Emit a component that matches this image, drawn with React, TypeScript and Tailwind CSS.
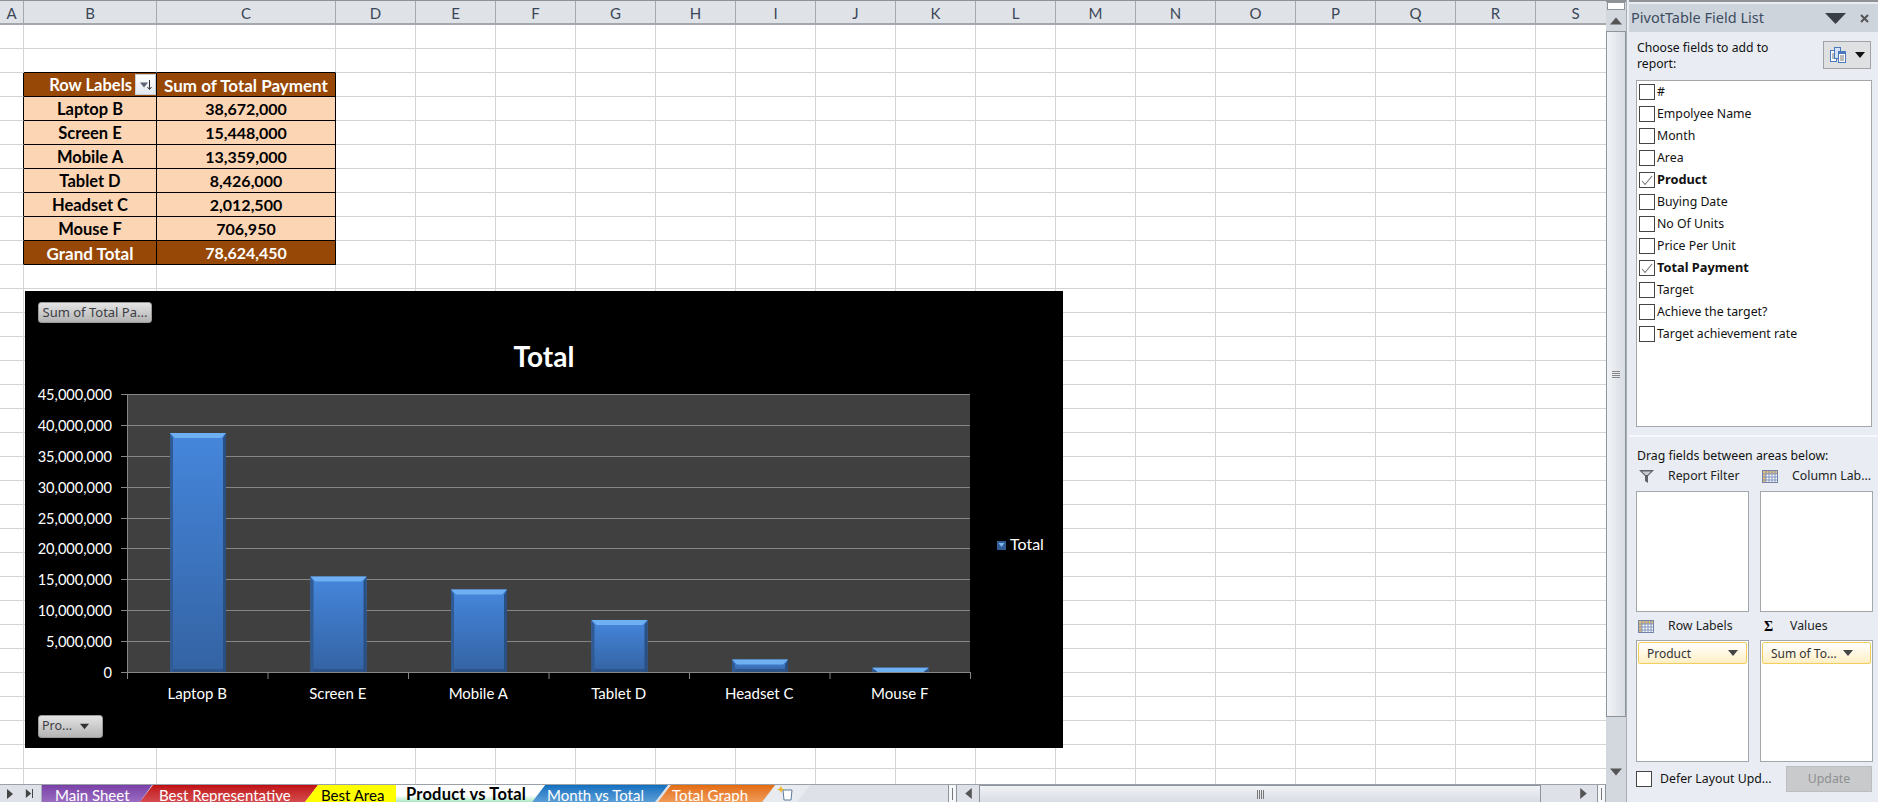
import { ReactNode } from 'react';

const columns = [
  { name: 'A', width: 'w-[24px]' },
  { name: 'B', width: 'w-[133px]' },
  { name: 'C', width: 'w-[179px]' },
  ...'DEFGHIJKLMNOPQRS'.split('').map((name) => ({ name, width: 'w-[80px]' })),
];

const pivotRows = [
  { label: 'Laptop B', total: '38,672,000', value: 38672000 },
  { label: 'Screen E', total: '15,448,000', value: 15448000 },
  { label: 'Mobile A', total: '13,359,000', value: 13359000 },
  { label: 'Tablet D', total: '8,426,000', value: 8426000 },
  { label: 'Headset C', total: '2,012,500', value: 2012500 },
  { label: 'Mouse F', total: '706,950', value: 706950 },
];

const fields = [
  { name: '#' },
  { name: 'Empolyee Name' },
  { name: 'Month' },
  { name: 'Area' },
  { name: 'Product', checked: true },
  { name: 'Buying Date' },
  { name: 'No Of Units' },
  { name: 'Price Per Unit' },
  { name: 'Total Payment', checked: true },
  { name: 'Target' },
  { name: 'Achieve the target?' },
  { name: 'Target achievement rate' },
];

const sansSheet = "font-['Lato','Liberation_Sans',sans-serif]";
const sansPanel = "font-['Noto_Sans','Liberation_Sans',sans-serif]";

function Triangle({ size = 8, dir = 'down', color = '#444' }: { size?: number; dir?: 'down' | 'up' | 'left' | 'right'; color?: string }) {
  const points = {
    down: '0,2 10,2 5,8',
    up: '0,8 10,8 5,2',
    left: '8,0 8,10 2,5',
    right: '2,0 2,10 8,5',
  }[dir];
  return (
    <svg width={size} height={size} viewBox="0 0 10 10" className="shrink-0">
      <polygon points={points} fill={color} />
    </svg>
  );
}

function PivotCell({ row, col }: { row: number; col: number }) {
  // row 2 is the pivot header, rows 3-8 the data, row 9 the grand total
  if ((col !== 1 && col !== 2) || row < 2 || row > 9) return null;
  if (row === 2) {
    return col === 1 ? (
      <div className="flex h-full items-center justify-end gap-[3px] text-[16.5px] text-white">
        <span className="pt-[1px]">Row Labels</span>
        <span className="flex h-[21px] w-[21px] items-center justify-center border border-[#c5cdd8] bg-gradient-to-b from-white to-[#e3e8ef]">
          <Triangle size={8} color="#5a6472" />
          <svg width="5" height="12" viewBox="0 0 5 12" className="-ml-[1px]">
            <path d="M2.500 1v9M0.500 8l2 2.500L4.500 8" stroke="#333" fill="none" />
          </svg>
        </span>
      </div>
    ) : (
      <div className="flex h-full items-center justify-center pt-[1px] text-[17px] text-white">Sum of Total Payment</div>
    );
  }
  const item = pivotRows[row - 3];
  const text = row === 9 ? (col === 1 ? 'Grand Total' : '78,624,450') : col === 1 ? item.label : item.total;
  const size = col === 2 ? 'text-[16px]' : row === 9 ? 'text-[17px]' : 'text-[16.5px]';
  return <div className={`flex h-full items-center justify-center pt-[1px] ${size} ${row === 9 ? 'text-white' : 'text-black'}`}>{text}</div>;
}

function cellClass(row: number, col: number) {
  const inTable = row >= 2 && row <= 9;
  const body = col === 1 || col === 2;
  if (inTable && body) return `border-r border-b border-black ${row === 2 || row === 9 ? 'bg-[#974706]' : 'bg-[#fcd5b4]'}`;
  if (inTable && col === 0) return 'border-b border-b-[#d4d4d4] border-r border-r-black';
  if (row === 1 && body) return 'border-r border-r-[#d4d4d4] border-b border-b-black';
  return 'border-r border-b border-[#d4d4d4]';
}

function Sheet() {
  return (
    <div className="relative min-h-0 flex-1 overflow-hidden bg-white">
      {Array.from({ length: 32 }).map((_, row) => (
        <div key={row} className="flex h-[24px]">
          {columns.map((c, col) => (
            <div key={c.name} className={`h-[24px] shrink-0 ${c.width} ${cellClass(row, col)} font-bold leading-none ${sansSheet}`}>
              <PivotCell row={row} col={col} />
            </div>
          ))}
        </div>
      ))}
      <Chart />
    </div>
  );
}

function ChartButton({ children, className }: { children: ReactNode; className: string }) {
  return (
    <div className={`flex shrink-0 items-center rounded-[3px] border border-[#9a9a9a] bg-gradient-to-b from-[#e4e4e4] to-[#b4b4b4] text-[13px] text-[#3c3c44] ${sansPanel} ${className}`}>
      {children}
    </div>
  );
}

function Chart() {
  const plot = { left: 102, right: 945, top: 14, bottom: 292 };
  const catWidth = (plot.right - plot.left) / 6;
  const plotHeight = plot.bottom - plot.top;
  const ticks = [45, 40, 35, 30, 25, 20, 15, 10, 5, 0];
  const fmt = (n: number) => (n === 0 ? '0' : `${n},000,000`);
  return (
    <div className="absolute left-[25px] top-[266px] flex h-[457px] w-[1038px] flex-col bg-black pl-[13px] pt-[11px]">
      <ChartButton className="h-[21px] w-[114px] justify-center">Sum of Total Pa...</ChartButton>
      <div className={`-ml-[13px] mt-[15px] h-[36px] text-center text-[28px] font-bold leading-[36px] text-white ${sansSheet}`}>Total</div>
      <svg width="1038" height="335" viewBox="0 0 1038 335" className={`-ml-[13px] mt-[6px] shrink-0 ${sansSheet}`}>
        <defs>
          <linearGradient id="barFill" x1="0" y1="0" x2="0" y2="1">
            <stop offset="0" stopColor="#4586dc" />
            <stop offset="1" stopColor="#3463a3" />
          </linearGradient>
        </defs>
        <rect x={plot.left} y={plot.top} width={plot.right - plot.left} height={plotHeight} fill="#404040" />
        {ticks.map((t) => {
          const y = Math.round(plot.bottom - (t / 45) * plotHeight) + 0.5;
          return (
            <g key={t}>
              <line x1={plot.left - 6} x2={plot.right} y1={y} y2={y} stroke="#868686" />
              <text x={87} y={y + 5} textAnchor="end" fill="#fff" fontSize="14.6">
                {fmt(t)}
              </text>
            </g>
          );
        })}
        <line x1={plot.left + 0.5} x2={plot.left + 0.5} y1={plot.top} y2={plot.bottom} stroke="#868686" />
        {pivotRows.map((r, i) => {
          const h = (r.value / 45000000) * plotHeight;
          const x = plot.left + catWidth * i + 43;
          const w = 56;
          const top = plot.bottom - h;
          const bevel = Math.min(5, h);
          const foot = Math.min(3, h);
          return (
            <g key={r.label}>
              <rect x={x} y={top} width={w} height={h} fill="url(#barFill)" />
              <polygon points={`${x},${plot.bottom} ${x + w},${plot.bottom} ${x + w - 3},${plot.bottom - foot} ${x + 3},${plot.bottom - foot}`} fill="#2c5488" />
              <polygon points={`${x},${top} ${x + 3},${top + bevel} ${x + 3},${plot.bottom} ${x},${plot.bottom}`} fill="#2f5a94" />
              <polygon points={`${x + w},${top} ${x + w - 3},${top + bevel} ${x + w - 3},${plot.bottom} ${x + w},${plot.bottom}`} fill="#2a5083" />
              <polygon points={`${x},${top} ${x + w},${top} ${x + w - 5},${top + bevel} ${x + 5},${top + bevel}`} fill="#6eb0f2" />
              <text x={plot.left + catWidth * (i + 0.5)} y={319} textAnchor="middle" fill="#fff" fontSize="15">
                {r.label}
              </text>
              <line x1={plot.left + catWidth * (i + 1) + 0.5} x2={plot.left + catWidth * (i + 1) + 0.5} y1={plot.bottom} y2={plot.bottom + 7} stroke="#868686" />
            </g>
          );
        })}
        <line x1={plot.left + 0.5} x2={plot.left + 0.5} y1={plot.bottom} y2={plot.bottom + 7} stroke="#868686" />
        <rect x={972} y={161} width={9} height={9} fill="#315c96" />
        <polygon points="973.5,163 979.5,163 976.5,167" fill="#7db8f0" />
        <text x={985} y={170} fill="#fff" fontSize="16">
          Total
        </text>
      </svg>
      <ChartButton className="h-[23px] w-[65px] gap-[8px] pl-[3px]">
        <span className="text-[12.5px]">Pro...</span>
        <Triangle size={9} color="#333" />
      </ChartButton>
    </div>
  );
}

const slantBoth = '[clip-path:polygon(13px_0,100%_0,calc(100%-13px)_100%,0_100%)]';
const slantLeft = '[clip-path:polygon(13px_0,100%_0,100%_100%,0_100%)]';

const tabsBefore = [
  { name: 'Best Representative', width: 'w-[178px]', ml: '-ml-[12px]', pl: 'pl-[19px]', fill: 'bg-gradient-to-b from-[#c00a12] to-[#d44a4e]', text: 'text-white', clip: slantBoth },
  { name: 'Best Area', width: 'w-[91px]', ml: '-ml-[13px]', pl: 'pl-[16px]', fill: 'bg-[#ffff00]', text: 'text-black', clip: slantLeft },
];

const tabsAfter = [
  { name: 'Month vs Total', width: 'w-[136px]', ml: '-ml-[13px]', pl: 'pl-[15px]', fill: 'bg-gradient-to-b from-[#0e70c0] to-[#5a9ed6]', text: 'text-white', clip: slantBoth },
  { name: 'Total Graph', width: 'w-[117px]', ml: '-ml-[10px]', pl: 'pl-[14px]', fill: 'bg-gradient-to-b from-[#e46c0a] to-[#ee9a55]', text: 'text-white', clip: slantBoth },
];

function SheetTab({ tab }: { tab: (typeof tabsBefore)[number] }) {
  return (
    <div className={`flex h-[17px] shrink-0 items-center whitespace-nowrap pt-[3px] text-[15px] leading-none ${tab.clip} ${tab.width} ${tab.ml} ${tab.pl} ${tab.fill} ${tab.text}`}>
      {tab.name}
    </div>
  );
}

function TabBar() {
  return (
    <div className={`flex h-[18px] shrink-0 items-end overflow-hidden border-t border-[#9aa1a9] bg-[#dee2e8] ${sansSheet}`}>
      <div className="flex w-[42px] shrink-0 items-center gap-[9px] self-stretch border-r border-[#aab0b8] pl-[5px]">
        <Triangle size={10} dir="right" color="#444" />
        <span className="flex items-center">
          <Triangle size={9} dir="right" color="#444" />
          <span className="-ml-[1px] h-[9px] w-[1px] bg-[#444]" />
        </span>
      </div>
      <div className="flex h-[17px] w-[110px] shrink-0 items-center bg-gradient-to-b from-[#7a40a8] to-[#9a6cc0] pl-[13px] pt-[3px] text-[15px] leading-none text-white [clip-path:polygon(0_0,100%_0,calc(100%-12px)_100%,0_100%)]">
        Main Sheet
      </div>
      {tabsBefore.map((tab) => (
        <SheetTab key={tab.name} tab={tab} />
      ))}
      <div className="relative z-10 -mt-[1px] flex h-[17px] w-[149px] shrink-0 items-center whitespace-nowrap bg-gradient-to-b from-white from-60% to-[#a9e5c2] pl-[10px] pt-[1px] text-[16.5px] font-bold leading-none tracking-[0.2px] text-black [clip-path:polygon(0_0,100%_0,calc(100%-13px)_100%,0_100%)]">
        Product vs Total
      </div>
      {tabsAfter.map((tab) => (
        <SheetTab key={tab.name} tab={tab} />
      ))}
      <div className="-ml-[12px] flex h-[17px] w-[47px] shrink-0 items-center bg-[#e8ebf0] pl-[14px] [clip-path:polygon(13px_0,100%_0,calc(100%-13px)_100%,0_100%)]">
        <svg width="17" height="15" viewBox="0 0 17 15">
          <path d="M6 4h9l-1 10H7z" fill="#fff" stroke="#5b7a9c" />
          <path d="M4 0l1 2.500 2.500 1-2.500 1-1 2.500-1-2.500L0 3.500l2.500-1z" fill="#f0b429" />
        </svg>
      </div>
      <div className="ml-auto flex h-full items-stretch">
        <div className="flex w-[9px] items-center justify-center border-x border-[#8d949c] bg-[#f6f7f9]">
          <span className="h-[12px] w-[1px] bg-[#777]" />
        </div>
        <div className="flex w-[22px] items-center justify-center">
          <Triangle size={11} dir="left" color="#555" />
        </div>
        <div className="flex w-[562px] items-center justify-center gap-[1px] rounded-t-[1px] border-x border-t border-[#8d949c] bg-gradient-to-b from-[#f1f3f6] to-[#d8dde4]">
          <span className="h-[9px] w-[1px] bg-[#777]" />
          <span className="h-[9px] w-[1px] bg-[#777]" />
          <span className="h-[9px] w-[1px] bg-[#777]" />
          <span className="h-[9px] w-[1px] bg-[#777]" />
        </div>
        <div className="flex w-[56px] items-center justify-end pr-[8px]">
          <Triangle size={11} dir="right" color="#555" />
        </div>
        <div className="flex w-[9px] items-center justify-center border-x border-[#8d949c] bg-[#f6f7f9]">
          <span className="h-[12px] w-[1px] bg-[#777]" />
        </div>
      </div>
    </div>
  );
}

function VerticalScrollbar() {
  return (
    <div className="flex w-[20px] shrink-0 flex-col border-t-2 border-[#8f9296] bg-[#d3d8df]">
      <div className="mx-[1px] h-[8px] shrink-0 border border-[#8d949c] bg-white" />
      <div className="flex h-[21px] shrink-0 items-center justify-center">
        <Triangle size={12} dir="up" color="#555" />
      </div>
      <div className="flex h-[686px] shrink-0 flex-col items-center justify-center gap-[1px] border border-[#8d949c] bg-gradient-to-r from-[#f1f3f6] to-[#d8dde4]">
        <span className="h-[1px] w-[8px] bg-[#888]" />
        <span className="h-[1px] w-[8px] bg-[#888]" />
        <span className="h-[1px] w-[8px] bg-[#888]" />
        <span className="h-[1px] w-[8px] bg-[#888]" />
      </div>
      <div className="flex flex-1 items-end justify-center pb-[24px]">
        <Triangle size={12} color="#555" />
      </div>
    </div>
  );
}

function CheckBox({ checked }: { checked?: boolean }) {
  return (
    <span className="flex h-[16px] w-[16px] shrink-0 items-center justify-center border border-[#444] bg-white">
      {checked && (
        <svg width="12" height="11" viewBox="0 0 12 11">
          <path d="M1 6l3 3.500L11 1" stroke="#777" strokeWidth="1.100" fill="none" />
        </svg>
      )}
    </span>
  );
}

function GridIcon() {
  return (
    <svg width="16" height="13" viewBox="0 0 16 13" className="shrink-0">
      <rect x="0.500" y="0.500" width="15" height="12" fill="#fff" stroke="#7484a8" />
      <rect x="1" y="1" width="14" height="3" fill="#e3bd74" />
      <rect x="1" y="1" width="3" height="11" fill="#e3bd74" />
      <path d="M4 1v11M7 1v11M10 1v11M13 1v11M1 4h14M1 7h14M1 10h14" stroke="#7f92bb" />
    </svg>
  );
}

function AreaBox({ height, children }: { height: string; children?: ReactNode }) {
  return <div className={`w-[113px] border border-[#a3a6ab] bg-white p-[1px] ${height}`}>{children}</div>;
}

function Pill({ label, gap }: { label: string; gap: string }) {
  return (
    <div className={`flex h-[22px] w-[109px] items-center rounded-[2px] border border-[#f2ce5c] bg-gradient-to-b from-white to-[#ffefc4] pl-[8px] text-[12px] text-[#333] ${gap}`}>
      <span className="pt-[1px]">{label}</span>
      <Triangle size={10} color="#444" />
    </div>
  );
}

function FieldPanel() {
  return (
    <div className={`flex w-[252px] shrink-0 flex-col border-l border-[#a8adb4] bg-[#e9edf3] pl-[2px] ${sansPanel}`}>
      <div className="h-[2px] shrink-0 bg-[#8f9296]" />
      <div className="h-[2px] shrink-0 bg-[#e9edf3]" />
      <div className="flex h-[28px] shrink-0 items-center bg-[#cdd4dc] pl-[2px] text-[14.5px] text-[#3d4c5f]">
        <span>PivotTable Field List</span>
        <span className="ml-auto flex items-center gap-[14px] pr-[9px]">
          <svg width="21" height="11" viewBox="0 0 21 11">
            <polygon points="0,0 21,0 10.500,11" fill="#3a3f47" />
          </svg>
          <svg width="9" height="9" viewBox="0 0 9 9">
            <path d="M1 1l7 7M8 1l-7 7" stroke="#555" strokeWidth="2" />
          </svg>
        </span>
      </div>
      <div className="mt-[9px] flex h-[28px] shrink-0 items-start pl-[8px] pr-[7px]">
        <div className="-mt-[1px] text-[12.2px] leading-[16px] text-[#111]">
          Choose fields to add to
          <br />
          report:
        </div>
        <div className="ml-auto flex h-[28px] w-[48px] items-center justify-center gap-[9px] border border-[#a0a2a5] bg-[#dfe0e2]">
          <svg width="16" height="16" viewBox="0 0 16 16">
            <rect x="0.500" y="3.500" width="6" height="11" fill="#fff" stroke="#4a78bc" />
            <rect x="4.500" y="0.500" width="6" height="11" fill="#d5e3f7" stroke="#4a78bc" />
            <rect x="8.500" y="4.500" width="7" height="11" fill="#fff" stroke="#4a78bc" />
            <rect x="9" y="5" width="6" height="2" fill="#4a78bc" />
            <path d="M10 9h4M10 11h4M10 13h4M2 7h2M2 9h2M2 11h2" stroke="#777" />
          </svg>
          <Triangle size={10} color="#111" />
        </div>
      </div>
      <div className="ml-[7px] mt-[11px] h-[347px] w-[236px] shrink-0 border border-[#a3a6ab] bg-white pl-[2px]">
        {fields.map((f) => (
          <div key={f.name} className={`flex h-[22px] items-center gap-[2px] text-[#111] ${f.checked ? 'text-[12.8px] font-bold' : 'text-[12.3px]'}`}>
            <CheckBox checked={f.checked} />
            <span>{f.name}</span>
          </div>
        ))}
      </div>
      <div className="mt-[8px] h-[2px] shrink-0 bg-[#f6f8fb]" />
      <div className="ml-[8px] mt-[11px] text-[12.3px] leading-[16px] text-[#111]">Drag fields between areas below:</div>
      <div className="ml-[7px] mt-[4px] grid w-[237px] grid-cols-[113px_113px] gap-x-[11px]">
        <div className="flex h-[16px] items-center gap-[14px] pl-[3px] text-[12.3px] text-[#222]">
          <svg width="15" height="13" viewBox="0 0 15 13" className="shrink-0">
            <path d="M0 0h15L9 6v7L6 11V6z" fill="#5f6368" />
            <path d="M3 1.500h9L8.500 5h-2z" fill="#c9ccd1" />
          </svg>
          <span>Report Filter</span>
        </div>
        <div className="flex h-[16px] items-center gap-[14px] pl-[2px] text-[12.3px] text-[#222]">
          <GridIcon />
          <span className="whitespace-nowrap">Column Lab...</span>
        </div>
        <div className="mt-[7px]">
          <AreaBox height="h-[121px]" />
        </div>
        <div className="mt-[7px]">
          <AreaBox height="h-[121px]" />
        </div>
        <div className="mt-[6px] flex h-[16px] items-center gap-[14px] pl-[2px] text-[12.3px] text-[#222]">
          <GridIcon />
          <span>Row Labels</span>
        </div>
        <div className="mt-[6px] flex h-[16px] items-center gap-[16px] pl-[4px] text-[12.3px] text-[#222]">
          <span className="w-[10px] font-['Liberation_Serif',serif] text-[14px] font-bold text-black">Σ</span>
          <span>Values</span>
        </div>
        <div className="mt-[6px]">
          <AreaBox height="h-[122px]">
            <Pill label="Product" gap="gap-[37px]" />
          </AreaBox>
        </div>
        <div className="mt-[6px]">
          <AreaBox height="h-[122px]">
            <Pill label="Sum of To..." gap="gap-[6px]" />
          </AreaBox>
        </div>
      </div>
      <div className="ml-[7px] mt-[4px] flex h-[26px] w-[236px] items-center gap-[8px] text-[12.3px] text-[#111]">
        <CheckBox />
        <span>Defer Layout Upd...</span>
        <div className="ml-auto flex h-[26px] w-[86px] items-center justify-center border border-[#bcbdc0] bg-[#c9cacc] text-[#8f9092]">Update</div>
      </div>
    </div>
  );
}

export default function App() {
  return (
    <div className="flex h-[802px] w-[1878px] overflow-hidden bg-[#e9edf3]">
      <div className="flex w-[1606px] shrink-0 flex-col">
        <div className="flex h-[25px] shrink-0 overflow-hidden border-t border-b-2 border-t-[#8f9296] border-b-[#a2a8ae] bg-[#dfe3e8]">
          {columns.map((c) => (
            <div key={c.name} className={`flex shrink-0 items-center justify-center border-r border-[#a2a8ae] pt-[3px] text-[15px] text-[#3b4657] ${c.width} ${sansSheet}`}>
              {c.name}
            </div>
          ))}
        </div>
        <Sheet />
        <TabBar />
      </div>
      <VerticalScrollbar />
      <FieldPanel />
    </div>
  );
}
